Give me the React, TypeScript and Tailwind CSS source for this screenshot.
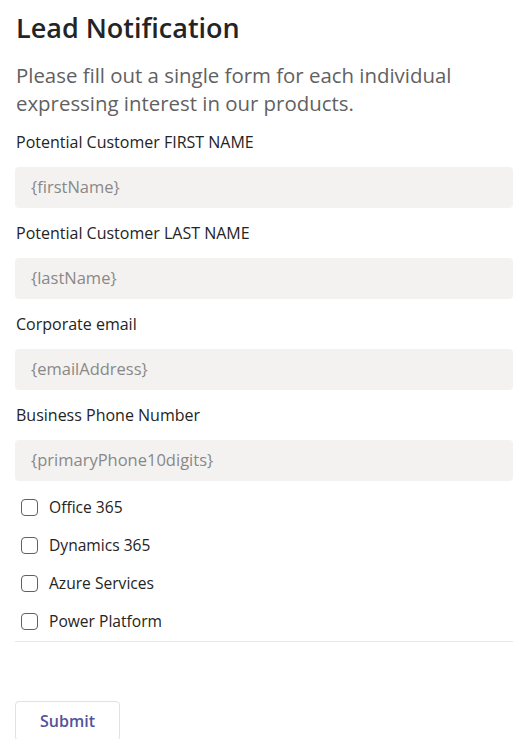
import React from "react";

const fields = [
  { label: "Potential Customer FIRST NAME", ph: "{firstName}" },
  { label: "Potential Customer LAST NAME", ph: "{lastName}" },
  { label: "Corporate email", ph: "{emailAddress}" },
  { label: "Business Phone Number", ph: "{primaryPhone10digits}" },
];

const checks = ["Office 365", "Dynamics 365", "Azure Services", "Power Platform"];

export default function App() {
  return (
    <div
      className="bg-white pl-[15px] pr-[2px] pt-[10px] text-[#242424] h-[739px] overflow-hidden"
      style={{ fontFamily: '"Open Sans", "Noto Sans", sans-serif' }}
    >
      <h1 className="text-[27px] font-semibold leading-[36px] text-[#242424] pl-[1px]">Lead Notification</h1>
      <p className="mt-[15px] text-[20.4px] leading-[28px] text-[#616161] pl-[1px]">
        Please fill out a single form for each individual expressing interest in our products.
      </p>
      <div className="flex flex-col">
        {fields.map((f, i) => (
          <div key={i} className="flex flex-col">
            <div className="mt-[13px] h-[25px] text-[16px] leading-[25px] pl-[1px]">{f.label}</div>
            <div className="mt-[12px] h-[41px] rounded-[4px] bg-[#f3f2f1] flex items-center px-[16px] text-[16.5px] text-[#8a8886]">
              {f.ph}
            </div>
          </div>
        ))}
      </div>
      <div className="mt-[15px] flex flex-col gap-[15px] pl-[6px]">
        {checks.map((c) => (
          <label key={c} className="flex items-center gap-[11px] h-[23px] text-[15.6px]">
            <span className="w-[17px] h-[17px] rounded-[4px] border-[1.5px] border-[#616161] bg-white" />
            <span>{c}</span>
          </label>
        ))}
      </div>
      <div className="mt-[8px] h-px bg-[#e6e6e6]" />
      <button className="mt-[59px] w-[105px] h-[40px] rounded-[4px] border border-[#e1dff1] bg-white text-[#52539a] text-[16px] font-semibold">
        Submit
      </button>
    </div>
  );
}
